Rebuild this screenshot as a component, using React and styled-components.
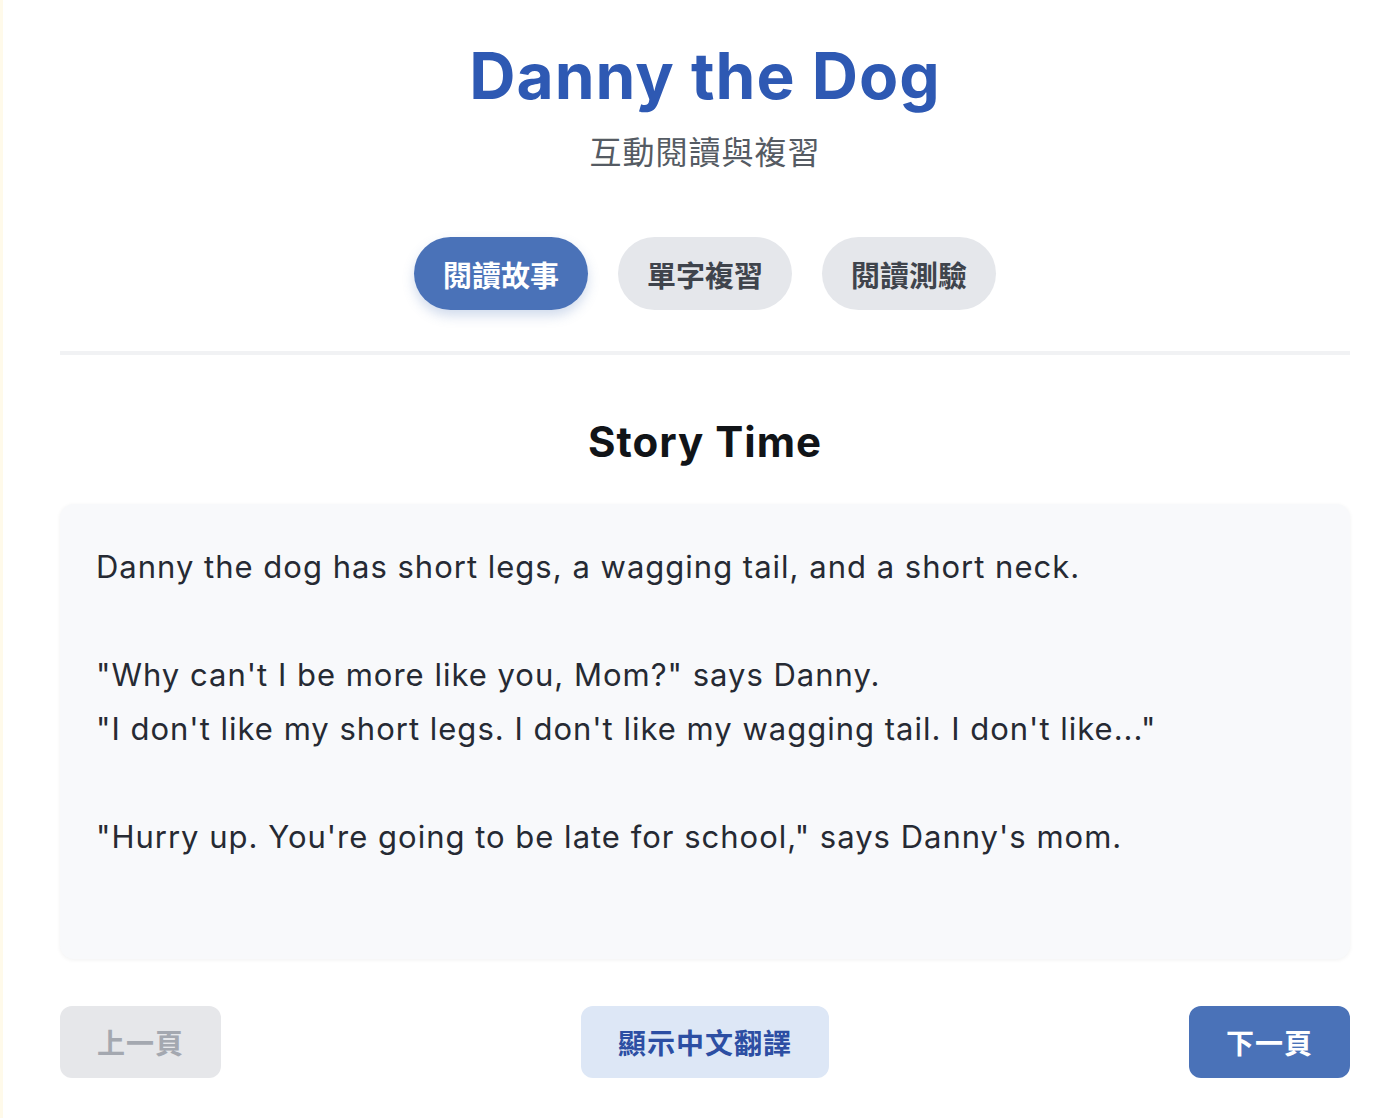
import React, { useState } from "react";
import styled, { createGlobalStyle } from "styled-components";

const Global = createGlobalStyle`
  html, body { margin: 0; padding: 0; background: #fffaea; }
  body { font-family: Inter, "Noto Sans CJK TC", sans-serif; }
  * { box-sizing: border-box; }
`;

const Page = styled.div`
  margin-left: 3px;
  min-height: 1118px;
  background: #ffffff;
  padding: 36px 50px 40px 57px;
  display: flex;
  flex-direction: column;
`;

const Header = styled.header`
  display: flex;
  flex-direction: column;
  align-items: center;
`;

const Title = styled.h1`
  margin: 0;
  font-family: Inter, sans-serif;
  font-size: 64px;
  line-height: 80px;
  font-weight: 700;
  color: #2e59b3;
  letter-spacing: 1px;
`;

const Subtitle = styled.p`
  margin: 10px 0 0;
  font-family: "Noto Sans CJK TC", sans-serif;
  font-size: 32px;
  line-height: 48px;
  letter-spacing: 1px;
  color: #555b63;
`;

const Tabs = styled.nav`
  display: flex;
  justify-content: center;
  gap: 30px;
  margin-top: 63px;
`;

const Tab = styled.button`
  border: none;
  cursor: pointer;
  height: 73px;
  padding: 0 29px;
  border-radius: 999px;
  font-family: "Noto Sans CJK TC", sans-serif;
  font-size: 29px;
  font-weight: 700;
  background: ${(p) => (p.$active ? "#4a72b8" : "#e5e7eb")};
  color: ${(p) => (p.$active ? "#ffffff" : "#3f444c")};
  box-shadow: ${(p) => (p.$active ? "0 6px 12px rgba(74,114,184,0.25)" : "none")};
`;

const Divider = styled.hr`
  border: none;
  height: 4px;
  background: #f1f2f4;
  margin: 41px 0 0;
`;

const SectionTitle = styled.h2`
  margin: 57px 0 0;
  text-align: center;
  font-family: Inter, sans-serif;
  font-size: 42px;
  line-height: 60px;
  font-weight: 700;
  letter-spacing: 1px;
  color: #111418;
`;

const StoryCard = styled.div`
  margin-top: 32px;
  min-height: 455px;
  background: #f8f9fb;
  border-radius: 14px;
  box-shadow: 0 1px 4px rgba(0, 0, 0, 0.06);
  padding: 36px 36px;
`;

const StoryText = styled.p`
  margin: 0;
  white-space: pre-line;
  font-family: Inter, sans-serif;
  font-size: 31px;
  line-height: 54px;
  letter-spacing: 1px;
  color: #262a33;
`;

const Controls = styled.div`
  margin-top: 47px;
  display: flex;
  justify-content: space-between;
  align-items: center;
`;

const NavButton = styled.button`
  border: none;
  height: 72px;
  padding: 0 37px;
  border-radius: 12px;
  font-family: "Noto Sans CJK TC", sans-serif;
  font-size: 28px;
  font-weight: 700;
  letter-spacing: 1px;
  cursor: ${(p) => (p.$variant === "disabled" ? "default" : "pointer")};
  background: ${(p) =>
    p.$variant === "primary" ? "#4a72b8" : p.$variant === "soft" ? "#dde7f6" : "#e6e7ea"};
  color: ${(p) =>
    p.$variant === "primary" ? "#ffffff" : p.$variant === "soft" ? "#2c4ea3" : "#a4a8b0"};
`;

const story = `Danny the dog has short legs, a wagging tail, and a short neck.

"Why can't I be more like you, Mom?" says Danny.
"I don't like my short legs. I don't like my wagging tail. I don't like..."

"Hurry up. You're going to be late for school," says Danny's mom.`;

export default function App() {
  const [tab, setTab] = useState(0);
  const tabs = ["閱讀故事", "單字複習", "閱讀測驗"];
  return (
    <>
      <Global />
      <Page>
        <Header>
          <Title>Danny the Dog</Title>
          <Subtitle>互動閱讀與複習</Subtitle>
        </Header>
        <Tabs>
          {tabs.map((t, i) => (
            <Tab key={t} $active={tab === i} onClick={() => setTab(i)}>
              {t}
            </Tab>
          ))}
        </Tabs>
        <Divider />
        <SectionTitle>Story Time</SectionTitle>
        <StoryCard>
          <StoryText>{story}</StoryText>
        </StoryCard>
        <Controls>
          <NavButton $variant="disabled">上一頁</NavButton>
          <NavButton $variant="soft">顯示中文翻譯</NavButton>
          <NavButton $variant="primary">下一頁</NavButton>
        </Controls>
      </Page>
    </>
  );
}
